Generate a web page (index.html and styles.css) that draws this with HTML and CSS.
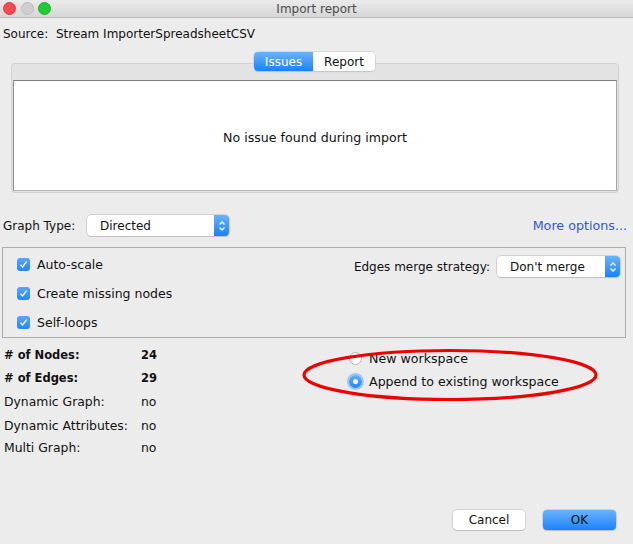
FILE: index.html
```html
<!DOCTYPE html>
<html lang="en">
<head>
    <meta charset="UTF-8">
    <title>Import report</title>
    <link rel="stylesheet" href="styles.css">
</head>
<body>
    <div class="window">
        <div class="titlebar">
            <div class="lights">
                <span class="light red"></span>
                <span class="light gray"></span>
                <span class="light green"></span>
            </div>
            <div class="title">Import report</div>
        </div>

        <div class="source">Source:&nbsp; Stream ImporterSpreadsheetCSV</div>

        <div class="tabs">
            <div class="segmented">
                <span class="seg active">Issues</span>
                <span class="seg">Report</span>
            </div>
            <div class="tab-panel">
                <div class="tab-body">No issue found during import</div>
            </div>
        </div>

        <div class="graph-row">
            <span class="label">Graph Type:</span>
            <div class="combo graph-combo">
                <span class="combo-text">Directed</span>
                <span class="combo-arrow">
                    <svg width="8" height="12" viewBox="0 0 8 12"><path d="M1.5 4.5 L4 2 L6.5 4.5 M1.5 7.5 L4 10 L6.5 7.5" fill="none" stroke="#fff" stroke-width="1.3"/></svg>
                </span>
            </div>
            <a class="more" href="#">More options...</a>
        </div>

        <div class="options">
            <div class="checks">
                <label class="check"><span class="box"><svg width="9" height="9" viewBox="0 0 9 9"><path d="M1.5 4.8 L3.6 7 L7.6 1.6" fill="none" stroke="#fff" stroke-width="1.4"/></svg></span>Auto-scale</label>
                <label class="check"><span class="box"><svg width="9" height="9" viewBox="0 0 9 9"><path d="M1.5 4.8 L3.6 7 L7.6 1.6" fill="none" stroke="#fff" stroke-width="1.4"/></svg></span>Create missing nodes</label>
                <label class="check"><span class="box"><svg width="9" height="9" viewBox="0 0 9 9"><path d="M1.5 4.8 L3.6 7 L7.6 1.6" fill="none" stroke="#fff" stroke-width="1.4"/></svg></span>Self-loops</label>
            </div>
            <div class="merge">
                <span class="label">Edges merge strategy:</span>
                <div class="combo merge-combo">
                    <span class="combo-text">Don't merge</span>
                    <span class="combo-arrow">
                        <svg width="8" height="12" viewBox="0 0 8 12"><path d="M1.5 4.5 L4 2 L6.5 4.5 M1.5 7.5 L4 10 L6.5 7.5" fill="none" stroke="#fff" stroke-width="1.3"/></svg>
                    </span>
                </div>
            </div>
        </div>

        <div class="bottom">
            <div class="stats">
                <span class="bold">#&nbsp;of Nodes:</span><span class="bold">24</span>
                <span class="bold">#&nbsp;of Edges:</span><span class="bold">29</span>
                <span>Dynamic Graph:</span><span>no</span>
                <span>Dynamic Attributes:</span><span>no</span>
                <span>Multi Graph:</span><span>no</span>
            </div>
            <div class="radios">
                <label class="radio"><span class="dot"></span>New workspace</label>
                <label class="radio"><span class="dot on"></span>Append to existing workspace</label>
            </div>
            <svg class="ring" width="300" height="56" viewBox="0 0 300 56">
                <ellipse cx="150" cy="28" rx="146" ry="24.5" fill="none" stroke="#ee0000" stroke-width="3.2"/>
            </svg>
        </div>

        <div class="buttons">
            <button class="btn">Cancel</button>
            <button class="btn primary">OK</button>
        </div>
    </div>
</body>
</html>
```

FILE: styles.css
```css
body {
    margin: 0;
    padding: 0;
    background-color: #ececec;
    font-family: "DejaVu Sans", "Liberation Sans", sans-serif;
    font-size: 12px;
    color: #111;
}

.window {
    width: 633px;
    height: 544px;
    display: flex;
    flex-direction: column;
    overflow: hidden;
}

.titlebar {
    height: 17px;
    border-bottom: 1px solid #b9b9b9;
    background: linear-gradient(#ebebeb, #d6d6d6);
    display: flex;
    align-items: center;
    position: relative;
}

.lights {
    display: flex;
    gap: 4.5px;
    padding-left: 3px;
}

.light {
    width: 11px;
    height: 11px;
    border-radius: 50%;
    display: block;
}

.red { background-color: #fc4a4e; border: 0.5px solid #e0393d; }
.gray { background-color: #cfcfcf; border: 0.5px solid #bdbdbd; }
.green { background-color: #1fcb37; border: 0.5px solid #17ad2b; }

.title {
    position: absolute;
    left: 0;
    right: 0;
    text-align: center;
    font-size: 12px;
    color: #4a4a4a;
}

.source {
    padding: 8px 3px 0;
    line-height: 16px;
}

.tabs {
    margin-top: 10px;
    padding-left: 11px;
    display: flex;
    flex-direction: column;
    align-items: flex-start;
}

.segmented {
    display: flex;
    height: 19px;
    margin-bottom: -8px;
    margin-left: 243px;
    z-index: 1;
    border-radius: 4px;
    background-color: #fff;
    box-shadow: 0 0 0 0.5px #c4c4c4, 0 1px 1px rgba(0, 0, 0, 0.12);
}

.seg {
    display: flex;
    align-items: center;
    justify-content: center;
    font-size: 12px;
}

.seg.active {
    width: 59px;
    color: #fff;
    border-radius: 4px 0 0 4px;
    background: linear-gradient(#6bb2fb, #1a82fb);
}

.seg:last-child {
    width: 62px;
}

.tab-panel {
    width: 608px;
    height: 130px;
    box-sizing: border-box;
    border: 1px solid #d2d2d2;
    border-radius: 4px;
    background-color: #e3e3e3;
    padding: 16px 1px 1px 1px;
}

.tab-body {
    height: 100%;
    box-sizing: border-box;
    padding-top: 3px;
    background-color: #fff;
    border-top: 1px solid #7d7d7d;
    border-left: 1px solid #8a8a8a;
    border-right: 1px solid #a5a5a5;
    border-bottom: 1px solid #b8b8b8;
    display: flex;
    align-items: center;
    justify-content: center;
    font-size: 12.6px;
}

.graph-row {
    margin-top: 22px;
    height: 21px;
    display: flex;
    align-items: center;
    padding-left: 3px;
}

.graph-row .label {
    width: 84px;
}

.combo {
    height: 21px;
    box-sizing: border-box;
    display: flex;
    align-items: stretch;
    background-color: #fff;
    border-radius: 4px;
    box-shadow: 0 0 0 0.5px #b8b8b8, 0 1px 1px rgba(0, 0, 0, 0.15);
    overflow: hidden;
}

.combo-text {
    flex: 1;
    display: flex;
    align-items: center;
    padding-left: 13px;
}

.combo-arrow {
    width: 15px;
    display: flex;
    align-items: center;
    justify-content: center;
    background: linear-gradient(#6bb2fb, #1a82fb);
}

.graph-combo {
    width: 142px;
}

.more {
    margin-left: auto;
    margin-right: 6px;
    color: #2f55e8;
    text-decoration: none;
    font-size: 12.7px;
}

.options {
    margin: 11px 0 0 2px;
    width: 624px;
    height: 91px;
    box-sizing: border-box;
    border: 1px solid #adadad;
    display: flex;
    justify-content: space-between;
}

.checks {
    padding: 2px 0 0 14px;
}

.check {
    height: 29px;
    display: flex;
    align-items: center;
    font-size: 12.5px;
}

.box {
    width: 13px;
    height: 13px;
    margin-right: 7px;
    border-radius: 3px;
    background: linear-gradient(#5aa6fb, #2088fb);
    display: flex;
    align-items: center;
    justify-content: center;
}

.merge {
    display: flex;
    align-items: center;
    height: 21px;
    padding: 8px 5px 0 0;
}

.merge .label {
    margin-right: 7px;
}

.merge-combo {
    width: 123px;
}

.bottom {
    margin-top: 5px;
    display: flex;
    position: relative;
}

.stats {
    display: grid;
    grid-template-columns: 137px auto;
    grid-template-rows: 23px 23px 25px 22px 22px;
    align-items: center;
    padding-left: 4px;
    font-size: 12.4px;
}

.bold {
    font-weight: bold;
    font-size: 11.5px;
}

.radios {
    margin-left: 192px;
    padding-top: 4px;
}

.radio {
    height: 23px;
    display: flex;
    align-items: center;
    font-size: 12.6px;
}

.dot {
    width: 13px;
    height: 13px;
    box-sizing: border-box;
    margin-right: 7px;
    border-radius: 50%;
    border: 1px solid #b3b3b3;
    background-color: #fff;
    display: flex;
    align-items: center;
    justify-content: center;
}

.dot.on {
    border: none;
    background: linear-gradient(#63aefb, #1e86fb);
    box-shadow: 0 0 0 2px rgba(110, 170, 245, 0.6);
}

.dot.on::after {
    content: "";
    width: 5px;
    height: 5px;
    border-radius: 50%;
    background-color: #fff;
}

.ring {
    position: absolute;
    left: 300px;
    top: 4px;
}

.buttons {
    margin-top: auto;
    padding: 0 17px 14px 0;
    display: flex;
    justify-content: flex-end;
    gap: 18px;
}

.btn {
    width: 72px;
    height: 20px;
    border: none;
    border-radius: 4px;
    background-color: #fff;
    box-shadow: 0 0 0 0.5px #b5b5b5, 0 1px 1px rgba(0, 0, 0, 0.15);
    font-family: "DejaVu Sans", "Liberation Sans", sans-serif;
    font-size: 12px;
    color: #111;
    padding: 0;
}

.btn.primary {
    width: 73px;
    background: linear-gradient(#6bb2fb, #1a82fb);
}
```
